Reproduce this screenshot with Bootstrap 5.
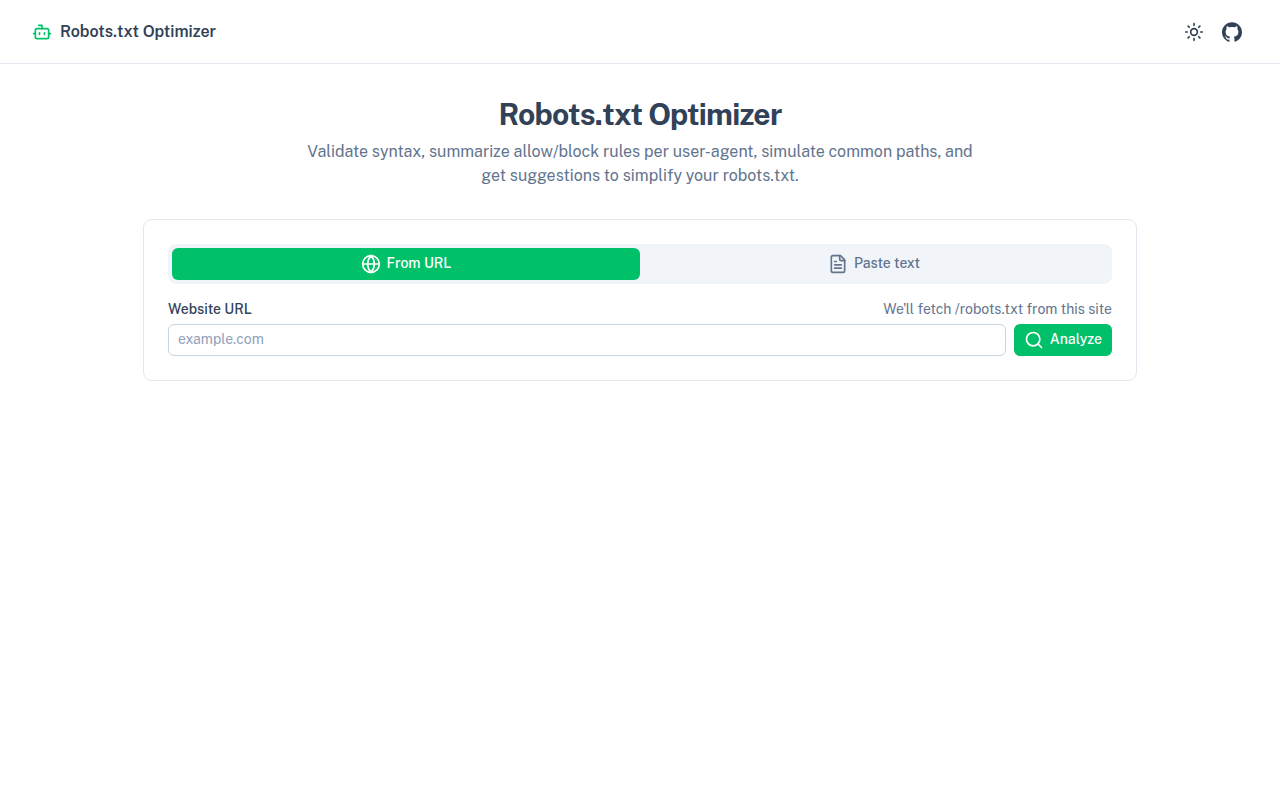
<!DOCTYPE html>
<html lang="en">
<head>
<meta charset="utf-8">
<meta name="viewport" content="width=device-width, initial-scale=1">
<title>Robots.txt Optimizer</title>
<link href="https://cdn.jsdelivr.net/npm/bootstrap@5.3.0/dist/css/bootstrap.min.css" rel="stylesheet">
<style>
  :root { --ink: #314158; --muted: #62748e; --brand: #00c16a; --line: #e2e8f0; }
  body { font-family: "Public Sans", Inter, sans-serif; color: var(--ink); font-size: 14px; line-height: 20px; }
  .site-header { height: 64px; border-bottom: 1px solid var(--line); }
  .brand-link { color: var(--ink); font-size: 16px; line-height: 24px; font-weight: 600; }
  .brand-link svg { color: var(--brand); }
  .header-actions, .icon-text { gap: 6px; }
  .icon-btn { color: var(--ink); padding: 6px; border: 0; line-height: 20px; }
  .icon { width: 20px; height: 20px; flex: none; fill: none; stroke: currentColor; stroke-width: 2; stroke-linecap: round; stroke-linejoin: round; }
  .page-main { max-width: 1024px; padding: 32px 16px; }
  .page-title { font-size: 30px; line-height: 36px; font-weight: 700; letter-spacing: -0.025em; }
  .intro { max-width: 672px; font-size: 16px; line-height: 24px; color: var(--muted); }
  .panel { margin-top: 32px; border-radius: 8px; box-shadow: 0 0 0 1px var(--line); }
  .tab-strip { background: #f1f5f9; border-radius: 8px; }
  .tab-strip .nav-link { color: var(--muted); font-size: 14px; font-weight: 500; line-height: 20px; padding: 6px 12px; border-radius: 6px; }
  .tab-strip .nav-link.active { background: var(--brand); color: #fff; }
  .field-label, .hint, .icon-text span { line-height: 18px; padding-bottom: 2px; }
  .field-label { font-weight: 500; }
  .hint { color: var(--muted); }
  .url-input { font-size: 14px; line-height: 20px; padding: 4px 9px 6px; border-color: #cad5e2; border-radius: 6px; color: var(--ink); }
  .url-input::placeholder { color: #90a1b9; }
  .btn-brand { --bs-btn-bg: var(--brand); --bs-btn-color: #fff; --bs-btn-hover-bg: #00a65b; --bs-btn-hover-color: #fff; border: 0; border-radius: 6px; font-size: 14px; line-height: 20px; font-weight: 500; padding: 6px 10px; }
</style>
</head>
<body>
<header class="site-header d-flex align-items-center justify-content-between px-4">
  <a href="#" class="brand-link d-flex align-items-center gap-2 ps-2 text-decoration-none">
    <svg class="icon" viewBox="0 0 24 24" aria-hidden="true"><path d="M12 8V4H8"/><rect width="16" height="12" x="4" y="8" rx="2"/><path d="M2 14h2M20 14h2M15 13v2M9 13v2"/></svg>
    <span>Robots.txt Optimizer</span>
  </a>
  <div class="header-actions d-flex align-items-center pe-2">
    <button type="button" class="btn icon-btn d-flex" aria-label="Toggle theme">
      <svg class="icon" viewBox="0 0 24 24" aria-hidden="true"><circle cx="12" cy="12" r="4"/><path d="M12 2v2M12 20v2M4.93 4.93l1.41 1.41M17.66 17.66l1.41 1.41M2 12h2M20 12h2M6.34 17.66l-1.41 1.41M19.07 4.93l-1.41 1.41"/></svg>
    </button>
    <a href="#" class="btn icon-btn d-flex" aria-label="GitHub">
      <svg width="20" height="20" viewBox="0 0 24 24" fill="currentColor" aria-hidden="true"><path d="M12 .297c-6.63 0-12 5.373-12 12 0 5.303 3.438 9.8 8.205 11.385.6.113.82-.258.82-.577 0-.285-.01-1.04-.015-2.04-3.338.724-4.042-1.61-4.042-1.61C4.422 18.07 3.633 17.7 3.633 17.7c-1.087-.744.084-.729.084-.729 1.205.084 1.838 1.236 1.838 1.236 1.07 1.835 2.809 1.305 3.495.998.108-.776.417-1.305.76-1.605-2.665-.3-5.466-1.332-5.466-5.93 0-1.31.465-2.38 1.235-3.22-.135-.303-.54-1.523.105-3.176 0 0 1.005-.322 3.3 1.23.96-.267 1.98-.399 3-.405 1.02.006 2.04.138 3 .405 2.28-1.552 3.285-1.23 3.285-1.23.645 1.653.24 2.873.12 3.176.765.84 1.23 1.91 1.23 3.22 0 4.61-2.805 5.625-5.475 5.92.42.36.81 1.096.81 2.22 0 1.606-.015 2.896-.015 3.286 0 .315.21.69.825.57C20.565 22.092 24 17.592 24 12.297c0-6.627-5.373-12-12-12"/></svg>
    </a>
  </div>
</header>
<main class="page-main container-fluid mx-auto">
  <div class="text-center">
    <h1 class="page-title mb-2">Robots.txt Optimizer</h1>
    <p class="intro mx-auto mb-0">Validate syntax, summarize allow/block rules per user-agent, simulate common paths, and get suggestions to simplify your robots.txt.</p>
  </div>
  <form class="panel p-4" id="analyze-form">
    <div class="tab-strip nav nav-pills nav-fill flex-nowrap p-1 mb-3" role="tablist">
      <button type="button" class="nav-link active icon-text flex-fill w-50 d-flex align-items-center justify-content-center" role="tab" aria-selected="true">
        <svg class="icon" viewBox="0 0 24 24" aria-hidden="true"><circle cx="12" cy="12" r="10"/><path d="M12 2a14.5 14.5 0 0 0 0 20 14.5 14.5 0 0 0 0-20M2 12h20"/></svg>
        <span>From URL</span>
      </button>
      <button type="button" class="nav-link icon-text flex-fill w-50 d-flex align-items-center justify-content-center" role="tab" aria-selected="false">
        <svg class="icon" viewBox="0 0 24 24" aria-hidden="true"><path d="M15 2H6a2 2 0 0 0-2 2v16a2 2 0 0 0 2 2h12a2 2 0 0 0 2-2V7Z"/><path d="M14 2v4a2 2 0 0 0 2 2h4M10 9H8M16 13H8M16 17H8"/></svg>
        <span>Paste text</span>
      </button>
    </div>
    <div class="d-flex justify-content-between mb-1">
      <label class="field-label" for="site-url">Website URL</label>
      <span class="hint" id="url-hint">We'll fetch /robots.txt from this site</span>
    </div>
    <div class="d-flex gap-2">
      <input type="text" class="form-control url-input" id="site-url" placeholder="example.com" aria-describedby="url-hint">
      <button type="submit" class="btn btn-brand icon-text d-flex align-items-center">
        <svg class="icon" viewBox="0 0 24 24" aria-hidden="true"><circle cx="11" cy="11" r="8"/><path d="m21 21-4.3-4.3"/></svg>
        <span>Analyze</span>
      </button>
    </div>
  </form>
</main>
<script src="https://cdn.jsdelivr.net/npm/bootstrap@5.3.0/dist/js/bootstrap.bundle.min.js"></script>
</body>
</html>
